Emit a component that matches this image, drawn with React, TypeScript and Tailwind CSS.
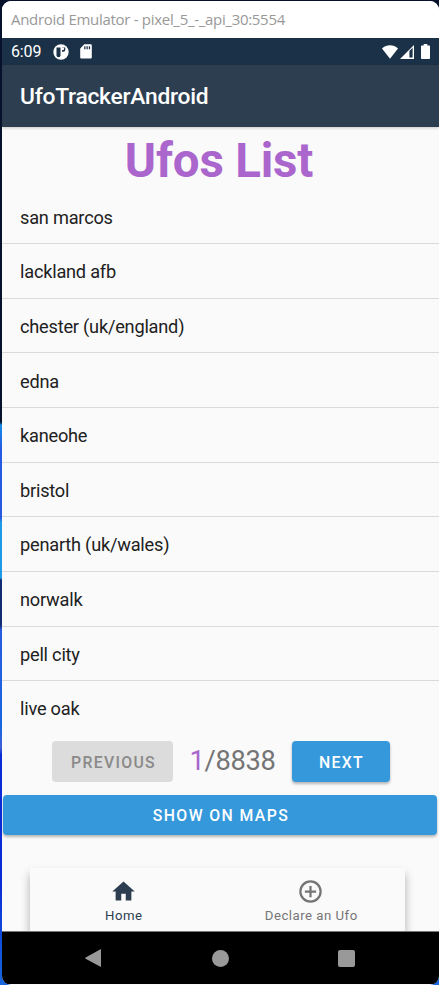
import React from "react";

const places = [
  "san marcos",
  "lackland afb",
  "chester (uk/england)",
  "edna",
  "kaneohe",
  "bristol",
  "penarth (uk/wales)",
  "norwalk",
  "pell city",
  "live oak",
];

function TitleBar() {
  return (
    <div className="flex h-[37px] shrink-0 items-center bg-white pl-[9px] font-['Open_Sans','Noto_Sans',sans-serif] text-[15px] tracking-[-0.3px] whitespace-nowrap text-[#999]">
      Android Emulator - pixel_5_-_api_30:5554
    </div>
  );
}

function StatusBar() {
  return (
    <div className="flex h-[27px] shrink-0 items-center bg-[#1b3147] pl-[9px] text-white">
      <span className="w-[42px] pt-px text-[16px] leading-none tracking-[-0.15px]">6:09</span>
      <svg className="h-4 w-4" viewBox="0 0 16 16">
        <circle cx="8" cy="8" r="7.7" fill="#fff" />
        <path d="M3.500 3.500h4v7.700a2 2 0 0 1-4 0z" fill="#1b3147" />
        <path d="M9 3.500h3.300v2.200a2 2 0 0 1-2 2H9z" fill="#1b3147" />
        <circle cx="9.800" cy="4.800" r="1.400" fill="#fff" />
      </svg>
      <svg className="ml-[11px] h-[15px] w-3" viewBox="0 0 12 15">
        <path d="M4.3.3h6.2c.8 0 1.3.5 1.3 1.3v11.6c0 .8-.5 1.4-1.3 1.4h-9c-.8 0-1.3-.6-1.3-1.4V4.4z" fill="#fff" />
        <path d="M4.2 2.2h1.3v3H4.2zM6.5 2.2h1.3v3H6.5zM8.8 2.2h1.3v3H8.8z" fill="#1b3147" />
      </svg>
      <div className="ml-auto flex items-center pr-[9px]">
        <svg className="h-[14px] w-4" viewBox="0 0 16 14">
          <path d="M0 3.4C4.6-.7 11.4-.7 16 3.4L8 13.8z" fill="#fff" />
        </svg>
        <svg className="ml-[2px] h-[14px] w-[14px]" viewBox="0 0 14 14">
          <path d="M14 0v14H0z" fill="#fff" />
          <path d="M9.4 6.1 12.6 2.8v9.8H9.4z" fill="#1b3147" />
        </svg>
        <svg className="ml-[7px] h-[15px] w-[9px]" viewBox="0 0 9 15">
          <path d="M2.7 0h3.6v1.4H8c.6 0 1 .4 1 1V14c0 .6-.4 1-1 1H1c-.6 0-1-.4-1-1V2.400c0-.6.4-1 1-1h1.700z" fill="#fff" />
        </svg>
      </div>
    </div>
  );
}

function Pager() {
  return (
    <div className="flex h-[41px] shrink-0 items-center pl-[50px]">
      <button className="h-[41px] w-[121px] rounded-[4px] bg-[#dcdcdc] pt-[2px] pl-[2px] text-[15.8px] font-medium tracking-[1.3px] text-[#8a8a8a]">
        PREVIOUS
      </button>
      <div className="w-[119px] pt-px text-center text-[27.3px] leading-none tracking-[-0.3px] text-[#757575]">
        <span className="text-[#aa66cc]">1</span>/8838
      </div>
      <button className="h-[41px] w-[98px] rounded-[4px] bg-[#3498db] pt-[2px] pl-px text-[15.8px] font-medium tracking-[1.35px] text-white shadow-[0_2px_3px_rgba(0,0,0,0.28)]">
        NEXT
      </button>
    </div>
  );
}

function BottomTabs() {
  return (
    <div className="mt-[33px] ml-[28px] flex h-[63px] w-[375px] shrink-0 bg-[#fafafa] text-[13.2px] leading-[16px] tracking-[0.5px] shadow-[0_6px_9px_rgba(0,0,0,0.3)]">
      <div className="flex w-1/2 flex-col items-center pt-[10px] text-[#2c3e50]">
        <svg className="h-[27px] w-[27px]" viewBox="0 0 24 24" fill="currentColor">
          <path d="M10 20v-6h4v6h5v-8h3L12 3 2 12h3v8z" />
        </svg>
        <span className="mt-[3px]">Home</span>
      </div>
      <div className="flex w-1/2 flex-col items-center pt-[10px] text-[#757575]">
        <svg className="mr-px h-[27px] w-[27px]" viewBox="0 0 24 24" fill="currentColor">
          <path d="M13 7h-2v4H7v2h4v4h2v-4h4v-2h-4zm-1-5a10 10 0 1 0 0 20 10 10 0 0 0 0-20m0 18a8 8 0 1 1 0-16 8 8 0 0 1 0 16" />
        </svg>
        <span className="mt-[3px]">Declare an Ufo</span>
      </div>
    </div>
  );
}

function SystemNav() {
  return (
    <div className="relative flex h-[53px] shrink-0 items-center border-t border-[#777] bg-black pl-[83px]">
      <svg className="h-[18px] w-4" viewBox="0 0 16 18">
        <path d="M16 0v18L.6 9.700q-.8-.7 0-1.200z" fill="#999" />
      </svg>
      <div className="ml-[111px] h-[17px] w-[17px] rounded-full bg-[#999]" />
      <div className="ml-[109px] h-[17px] w-[17px] rounded-[2px] bg-[#999]" />
    </div>
  );
}

export default function App() {
  return (
    <div className="h-[985px] w-[439px] overflow-hidden bg-[linear-gradient(180deg,#06112b_0px,#06112b_422px,#168be5_425px,#245be5_450px,#2858e0_518px,#1e9ae5_522px,#1e9ae5_578px,#132b70_580px,#132b70_625px,#285be0_630px,#1766df_725px,#3f60d8_748px,#0a2bd5_755px,#0a2bd5_880px,#1766df_985px)] pt-px pl-[2px] font-['Roboto',sans-serif]">
      <div className="flex h-[984px] flex-col overflow-hidden rounded-[9px] bg-[#fafafa]">
        <TitleBar />
        <StatusBar />
        <header className="relative flex h-[62px] shrink-0 items-center bg-[#2c3e50] pt-[3px] pl-[18px] text-[22.8px] font-medium tracking-[-0.25px] text-white shadow-[0_1px_3px_rgba(0,0,0,0.2)]">
          UfoTrackerAndroid
        </header>
        <h1 className="h-[62.500px] shrink-0 pt-[3px] pr-[3px] text-center text-[47.5px] leading-[63px] font-bold tracking-[-0.2px] text-[#aa66cc]">
          Ufos List
        </h1>
        <ul className="h-[551.500px] shrink-0">
          {places.map((place) => (
            <li
              key={place}
              className="flex h-[54.640px] items-center border-b border-[#dadada] pt-[2px] pl-[18px] text-[18.2px] tracking-[-0.22px] text-[#212121] last:border-transparent"
            >
              {place}
            </li>
          ))}
        </ul>
        <Pager />
        <button className="mt-[13px] ml-px h-[40px] w-[434px] shrink-0 rounded-[4px] bg-[#3498db] pt-px pl-[2px] text-[15.8px] font-medium tracking-[1.4px] text-white shadow-[0_2px_3px_rgba(0,0,0,0.28)]">
          SHOW ON MAPS
        </button>
        <BottomTabs />
        <SystemNav />
      </div>
    </div>
  );
}
